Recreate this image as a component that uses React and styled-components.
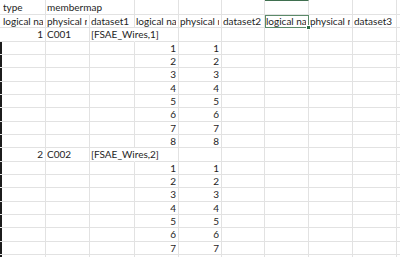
import React from 'react';
import styled, { createGlobalStyle, css } from 'styled-components';

const GlobalStyle = createGlobalStyle`
  html, body {
    margin: 0;
    padding: 0;
    background: #ffffff;
  }
  body {
    font-family: Lato, "Open Sans", "Liberation Sans", sans-serif;
    overflow: hidden;
  }
`;

const COLUMNS = '2px 44px 44px 45px 44px 43px 43px 44px 44px 44px 44px';

const Sheet = styled.div`
  width: 400px;
  height: 257px;
  overflow: hidden;
  display: flex;
  flex-direction: column;
`;

const Row = styled.div`
  display: grid;
  grid-template-columns: ${COLUMNS};
  height: ${p => p.$height}px;
  flex: none;
`;

const Gutter = styled.div`
  border-bottom: 1px solid #e4e4e4;
  background: ${p => (p.$dark ? '#1c1c1c' : '#ffffff')};
  background-clip: content-box;
`;

const Cell = styled.div`
  position: relative;
  box-sizing: border-box;
  min-width: 0;
  border-right: 1px solid ${p => (p.$spill ? 'transparent' : '#e2e2e2')};
  border-bottom: 1px solid #e2e2e2;
  padding: 0 2px 0 1px;
  font-size: 10px;
  color: #1e1e1e;
  white-space: nowrap;
  display: flex;
  align-items: center;
  justify-content: ${p => (p.$align === 'right' ? 'flex-end' : 'flex-start')};
  overflow: ${p => (p.$spill ? 'visible' : 'hidden')};
  z-index: ${p => (p.$spill ? 2 : 1)};
  ${p => p.$headerMark && css`
    border-top: 1px solid #3f6f4f;
  `}
  ${p => p.$selected && css`
    overflow: visible;
    outline: 1.5px solid #5b8a69;
    outline-offset: -1px;
    z-index: 3;
    &::after {
      content: '';
      position: absolute;
      right: -3px;
      bottom: -3px;
      width: 3px;
      height: 3px;
      background: #2f6e45;
      border: 1px solid #ffffff;
    }
  `}
`;

const Text = styled.span`
  display: block;
  flex: none;
  max-width: ${p => (p.$spill ? 'none' : '100%')};
  line-height: 1.1;
  padding-top: 1px;
  overflow: ${p => (p.$spill ? 'visible' : 'hidden')};
  text-overflow: clip;
`;

const blank = {};

const rows = [
  {
    height: 15,
    cells: [
      { text: 'type' },
      { text: 'membermap', spill: true },
      blank, blank, blank, blank,
      { headerMark: true },
      blank, blank, blank,
    ],
  },
  {
    height: 13.333,
    cells: [
      { text: 'logical name' },
      { text: 'physical name' },
      { text: 'dataset1' },
      { text: 'logical name' },
      { text: 'physical name' },
      { text: 'dataset2' },
      { text: 'logical name', selected: true },
      { text: 'physical name' },
      { text: 'dataset3' },
      blank,
    ],
  },
  {
    height: 13.333,
    dark: false,
    cells: [
      { text: '1', align: 'right' },
      { text: 'C001' },
      { text: '[FSAE_Wires,1]', spill: true },
      blank, blank, blank, blank, blank, blank, blank,
    ],
  },
];

const numberRow = n => ({
  height: 13.333,
  dark: true,
  cells: [
    blank, blank, blank,
    { text: String(n), align: 'right' },
    { text: String(n), align: 'right' },
    blank, blank, blank, blank, blank,
  ],
});

for (let i = 1; i <= 8; i++) rows.push(numberRow(i));

rows.push({
  height: 13.333,
  dark: true,
  cells: [
    { text: '2', align: 'right' },
    { text: 'C002' },
    { text: '[FSAE_Wires,2]', spill: true },
    blank, blank, blank, blank, blank, blank, blank,
  ],
});

for (let i = 1; i <= 7; i++) rows.push(numberRow(i));

rows.push({
  height: 13.333,
  dark: true,
  cells: [blank, blank, blank, blank, blank, blank, blank, blank, blank, blank],
});

const App = () => (
  <>
    <GlobalStyle />
    <Sheet>
      {rows.map((row, r) => (
        <Row key={r} $height={row.height}>
          <Gutter $dark={row.dark} />
          {row.cells.map((cell, c) => (
            <Cell
              key={c}
              $align={cell.align}
              $spill={cell.spill}
              $selected={cell.selected}
              $headerMark={cell.headerMark}
            >
              {cell.text && <Text $spill={cell.spill}>{cell.text}</Text>}
            </Cell>
          ))}
        </Row>
      ))}
    </Sheet>
  </>
);

export default App;
